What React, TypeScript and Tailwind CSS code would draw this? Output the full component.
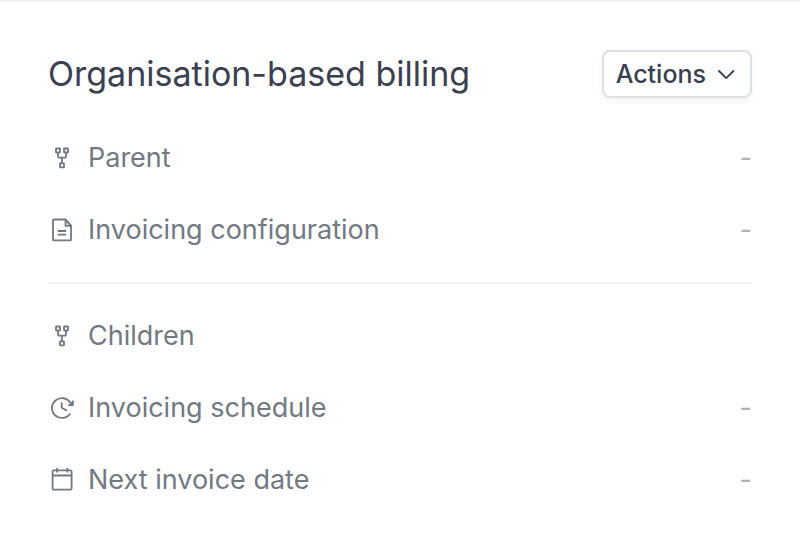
import type { ReactNode } from "react";

function Icon({ children }: { children: ReactNode }) {
  return (
    <svg
      className="size-7 shrink-0"
      viewBox="0 0 28 28"
      fill="none"
      stroke="currentColor"
      strokeWidth={1.8}
      strokeLinejoin="round"
      aria-hidden="true"
    >
      {children}
    </svg>
  );
}

function HierarchyIcon() {
  return (
    <Icon>
      <rect x="8" y="4.5" width="4" height="4" rx="0.4" />
      <rect x="16" y="4.5" width="4" height="4" rx="0.4" />
      <rect x="12" y="19.4" width="4" height="4" rx="0.4" />
      <path d="M10 8.8v4q0 .8.8.8h6.4q.8 0 .8-.8v-4M14 13.6v5.4" />
    </Icon>
  );
}

function DocumentIcon() {
  return (
    <Icon>
      <path d="M17.5 3.5H6q-1 0-1 1v18.9q0 1 1 1h16q1 0 1-1V9.5zM9.8 15h8.4M9.8 18.6h8.4" />
      <path d="M17.5 3.5v6.3H23z" fill="currentColor" fillOpacity={0.2} />
    </Icon>
  );
}

function ScheduleIcon() {
  return (
    <Icon>
      <path d="M22.2 19.4A9.9 9.9 0 1 1 22.3 8.8" />
      <path d="M13.7 8.5v5.3l5.2 2.8" />
      <path d="M25.2 6.5v5h-5z" fill="currentColor" strokeWidth={1} />
    </Icon>
  );
}

function CalendarIcon() {
  return (
    <Icon>
      <rect x="4.6" y="4.4" width="19" height="19.2" rx="1.2" />
      <path d="M4.6 9.5h19M9 2v4.4M19.4 2v4.4" />
    </Icon>
  );
}

function Row({ icon, label, value }: { icon: ReactNode; label: string; value?: string }) {
  return (
    <div className="flex h-10 items-center justify-between">
      <dt className="flex items-center gap-3 text-[#727982]">
        {icon}
        {label}
      </dt>
      {value && <dd className="text-[#b0b3b8]">{value}</dd>}
    </div>
  );
}

export default function App() {
  return (
    <section className="border-t-2 border-[#f1f1f2] bg-white px-12 pt-12 pb-12 font-['Inter',sans-serif] text-[27px] leading-10">
      <header className="flex items-center justify-between">
        <h2 className="text-[34px] text-[#3a4050]">Organisation-based billing</h2>
        <button
          type="button"
          className="flex h-12 items-center gap-2 rounded-lg border-2 border-[#dcdfe6] px-3 text-[25px] font-medium text-[#3a4050] shadow-[0_2px_6px_rgba(0,0,0,0.06)]"
        >
          Actions
          <svg
            className="size-6"
            viewBox="0 0 24 24"
            fill="none"
            stroke="currentColor"
            strokeWidth={1.8}
            strokeLinecap="round"
            strokeLinejoin="round"
            aria-hidden="true"
          >
            <path d="m5 9 7.2 7.2L19.4 9" />
          </svg>
        </button>
      </header>

      <dl className="mt-10 flex flex-col gap-8">
        <Row icon={<HierarchyIcon />} label="Parent" value="-" />
        <Row icon={<DocumentIcon />} label="Invoicing configuration" value="-" />
      </dl>
      <hr className="my-8 border-t-2 border-[#f1f1f2]" />
      <dl className="flex flex-col gap-8">
        <Row icon={<HierarchyIcon />} label="Children" />
        <Row icon={<ScheduleIcon />} label="Invoicing schedule" value="-" />
        <Row icon={<CalendarIcon />} label="Next invoice date" value="-" />
      </dl>
    </section>
  );
}
